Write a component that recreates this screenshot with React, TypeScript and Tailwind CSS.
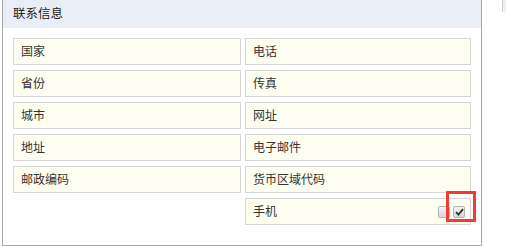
import React from "react";

const fields: [string, string][] = [
  ["国家", "电话"],
  ["省份", "传真"],
  ["城市", "网址"],
  ["地址", "电子邮件"],
  ["邮政编码", "货币区域代码"],
];

function Field({ label, children }: { label: string; children?: React.ReactNode }) {
  return (
    <div className="flex h-[27px] items-center justify-between border border-[#d6d6d6] bg-[#fefef0] pl-[7px] pr-[5px] text-[12px] text-[#333]">
      <span>{label}</span>
      {children}
    </div>
  );
}

function Box({ checked }: { checked?: boolean }) {
  return (
    <span className="flex h-[12px] w-[12px] items-center justify-center rounded-[2px] border border-[#b5b5b5] bg-gradient-to-b from-[#f4f4f4] to-[#d8d8d8]">
      {checked && (
        <svg width="9" height="8" viewBox="0 0 9 8">
          <path d="M1 4.2 L3.4 6.6 L8 1.2" fill="none" stroke="#333" strokeWidth="1.8" />
        </svg>
      )}
    </span>
  );
}

export default function App() {
  return (
    <div
      className="relative h-[246px] w-[506px] overflow-hidden bg-white"
      style={{ fontFamily: '"Liberation Sans", "Noto Sans CJK SC", sans-serif' }}
    >
      <div className="ml-[2px] h-[246px] w-[480px] border-x border-b border-[#a9a9a9]">
        <div className="flex h-[28px] items-center bg-[#e9edf6] pl-[10px] text-[12.5px] text-[#222]">
          联系信息
        </div>
        <div className="grid grid-cols-[228px_226px] gap-x-[4px] gap-y-[5px] pl-[10px] pt-[10px]">
          {fields.map(([a, b]) => (
            <React.Fragment key={a}>
              <Field label={a} />
              <Field label={b} />
            </React.Fragment>
          ))}
          <div />
          <Field label="手机">
            <span className="flex gap-[3px]">
              <Box />
              <Box checked />
            </span>
          </Field>
        </div>
      </div>
      <div className="absolute left-[446px] top-[191px] h-[31px] w-[30px] border-[3px] border-[#f23a3a]" />
      <div className="absolute right-0 top-0 h-[12px] w-[4px] border-l border-[#d0d0d0] bg-[#eeeeee]" />
    </div>
  );
}
